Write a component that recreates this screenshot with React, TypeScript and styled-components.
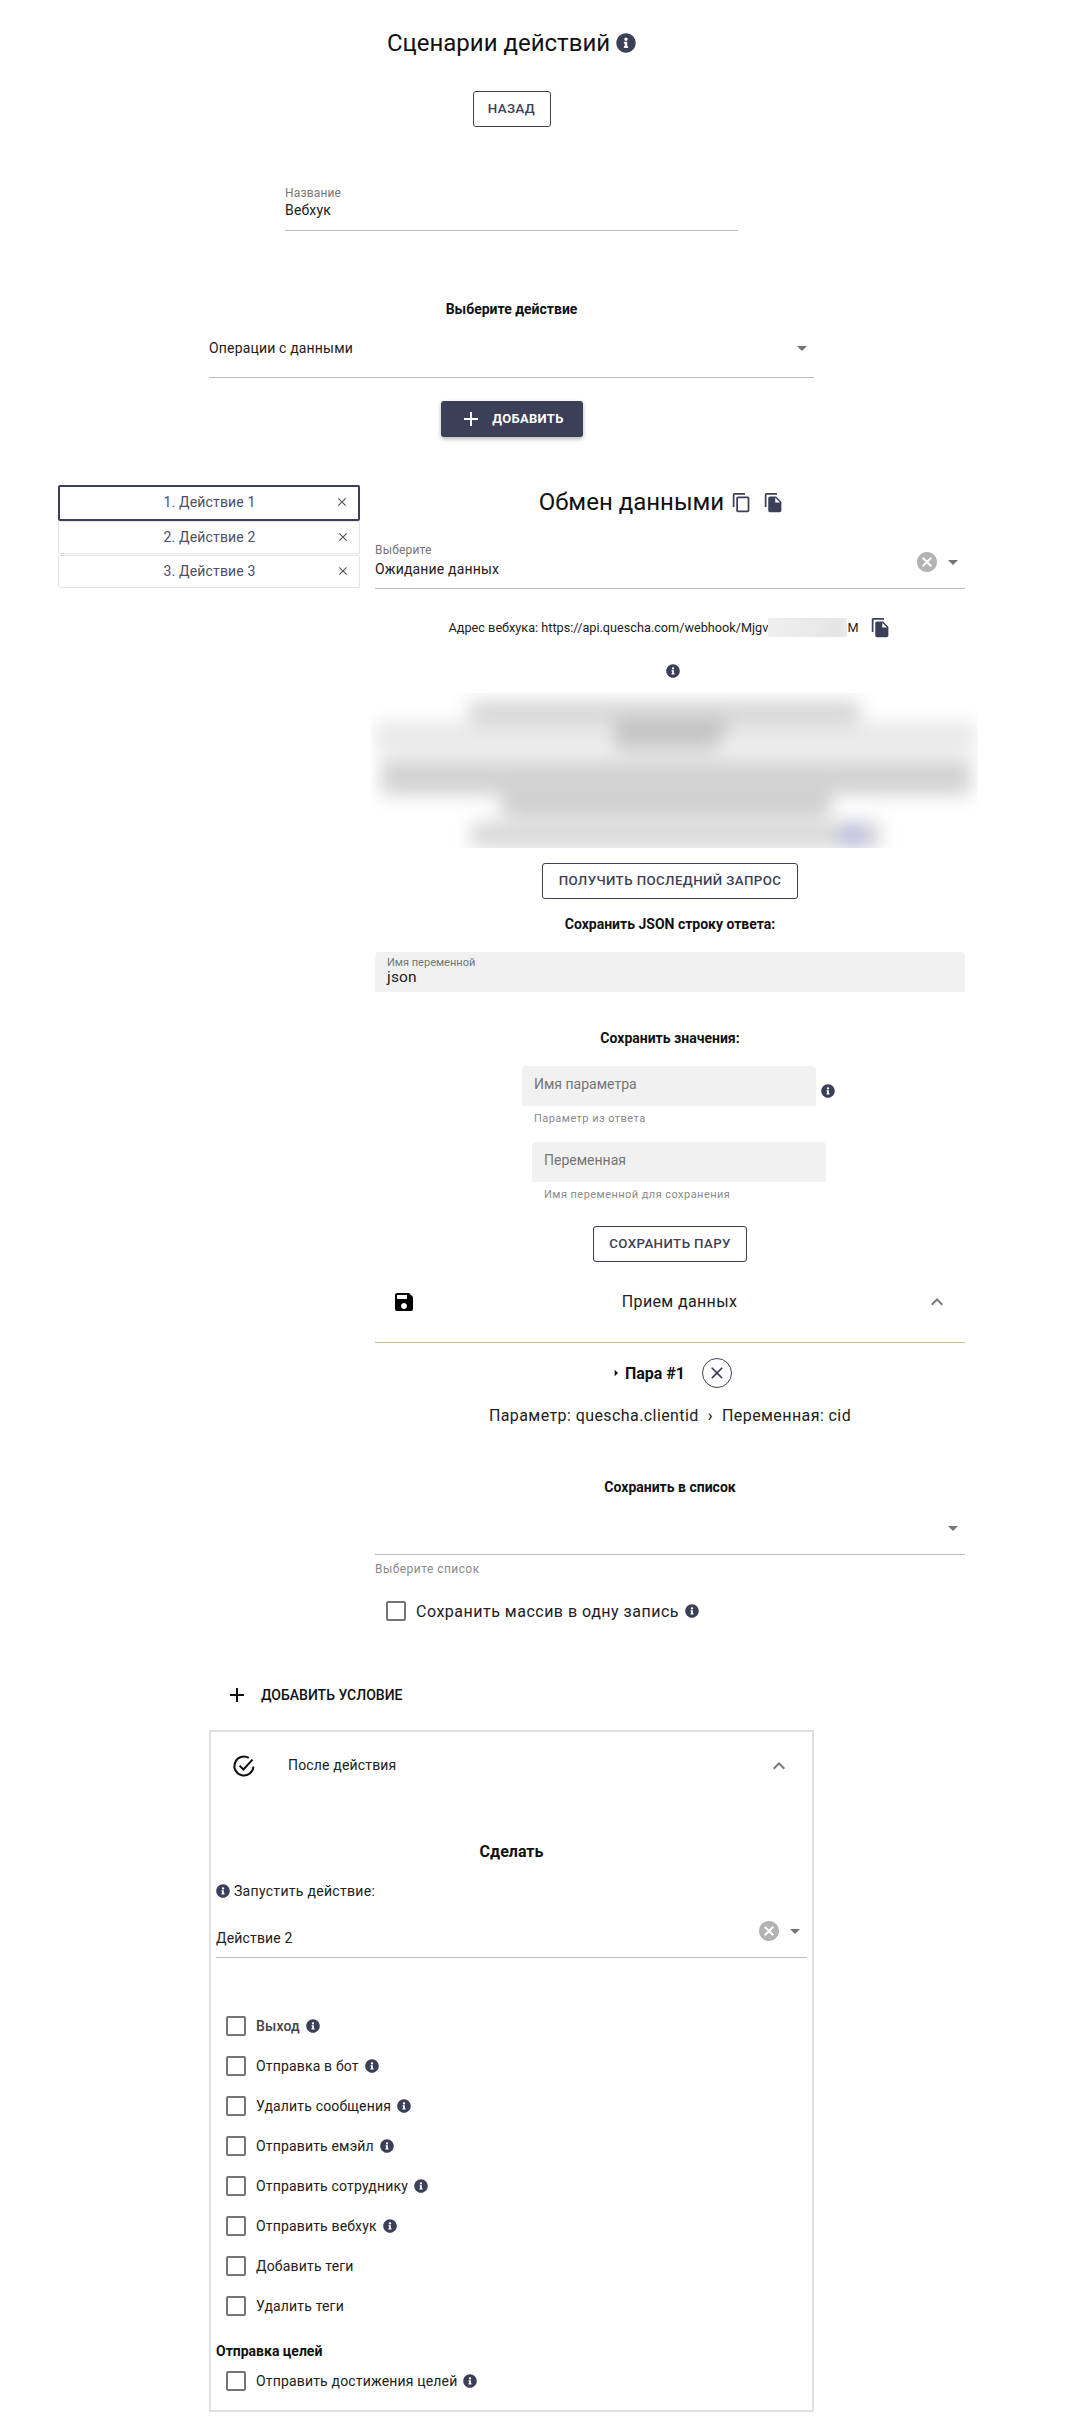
import React from "react";
import styled, { createGlobalStyle } from "styled-components";
import { FaInfoCircle } from "react-icons/fa";

const NAVY = "#3c3f58";

const Global = createGlobalStyle`
  html, body { margin: 0; padding: 0; background: #fff; }
  body { font-family: Roboto, "Noto Sans", sans-serif; color: #111; font-size: 14px; letter-spacing: 0.17px; }
  * { box-sizing: border-box; }
`;

const Page = styled.div`
  width: 1023px;
  padding: 27px 0 23px;
  display: flex;
  flex-direction: column;
  align-items: center;
`;

const TitleRow = styled.div<{ $mt?: number; $pr?: number }>`
  display: flex;
  align-items: center;
  justify-content: center;
  gap: 6px;
  height: 32px;
  margin-top: ${(p) => p.$mt ?? 0}px;
  padding-right: ${(p) => p.$pr ?? 0}px;
  align-self: stretch;
`;

const Title = styled.h1`
  margin: 0;
  font-size: 24px;
  line-height: 32px;
  font-weight: 400;
  letter-spacing: 0;
  color: #111;
`;

const OutlineButton = styled.button<{ $mt: number; $w: number }>`
  width: ${(p) => p.$w}px;
  height: 36px;
  margin-top: ${(p) => p.$mt}px;
  flex: none;
  border: 1px solid ${NAVY};
  border-radius: 3px;
  background: #fff;
  color: ${NAVY};
  font: 500 13.3px/20px Roboto, sans-serif;
  letter-spacing: 0.4px;
  text-transform: uppercase;
  padding: 0;
  align-self: center;
`;

const NameField = styled.div`
  width: 453px;
  height: 48px;
  margin-top: 56px;
  padding-top: 3px;
  border-bottom: 1px solid #bdbdbd;
`;

const SmallLabel = styled.div`
  font-size: 12px;
  line-height: 14px;
  color: #757575;
`;

const FieldValue = styled.div<{ $mt?: number }>`
  font-size: 14px;
  line-height: 20px;
  margin-top: ${(p) => p.$mt ?? 0}px;
  color: #212121;
`;

const SectionTitle = styled.div<{ $mt: number; $size?: number; $lh?: number }>`
  margin-top: ${(p) => p.$mt}px;
  font-size: ${(p) => p.$size ?? 14}px;
  line-height: ${(p) => p.$lh ?? 20}px;
  font-weight: 700;
  letter-spacing: 0;
  color: #111;
  text-align: center;
  align-self: stretch;
`;

const ActionSelect = styled.div`
  width: 605px;
  height: 59px;
  display: flex;
  align-items: center;
  justify-content: space-between;
  border-bottom: 1px solid #bdbdbd;
  color: #212121;
  font-size: 14px;
`;

const PrimaryButton = styled.button`
  width: 142px;
  height: 36px;
  margin-top: 23px;
  display: flex;
  align-items: center;
  justify-content: center;
  gap: 9px;
  border: 0;
  border-radius: 3px;
  background: ${NAVY};
  color: #fff;
  font: 700 13px/20px Roboto, sans-serif;
  letter-spacing: 0.3px;
  text-transform: uppercase;
  box-shadow: 0 2px 4px rgba(0, 0, 0, 0.3);
  padding: 0;
`;

const Workspace = styled.div`
  width: 907px;
  margin-top: 48px;
  display: grid;
  grid-template-columns: 302px 590px;
  column-gap: 15px;
  align-items: start;
`;

const TabList = styled.div`
  display: flex;
  flex-direction: column;
`;

const Tab = styled.div<{ $active?: boolean }>`
  height: ${(p) => (p.$active ? 36 : 33)}px;
  margin-bottom: ${(p) => (p.$active ? 0 : 1)}px;
  display: grid;
  grid-template-columns: 1fr 14px;
  align-items: center;
  padding: 0 9px 2px 24px;
  border: ${(p) => (p.$active ? `2px solid ${NAVY}` : "1px solid #e4e4e4")};
  border-radius: 2px;
  color: #4c4f66;
  font-size: 14px;
  text-align: center;
`;

const Panel = styled.div`
  display: flex;
  flex-direction: column;
  padding-top: 1px;
`;

const IconRow = styled.div`
  display: flex;
  gap: 11px;
  margin-left: 1px;
`;

const SelectBox = styled.div<{ $mt?: number; $h: number }>`
  height: ${(p) => p.$h}px;
  margin-top: ${(p) => p.$mt ?? 0}px;
  display: flex;
  align-items: flex-end;
  justify-content: space-between;
  border-bottom: 1px solid #bdbdbd;
`;

const SelectText = styled.div<{ $pb?: number }>`
  padding-bottom: ${(p) => p.$pb ?? 9}px;
  color: #212121;
`;

const SelectIcons = styled.div`
  display: flex;
  gap: 2px;
  margin-bottom: 14px;
`;

const Webhook = styled.div`
  margin-top: 26px;
  height: 24px;
  display: flex;
  align-items: center;
  justify-content: center;
  gap: 12px;
  font-size: 12.7px;
  letter-spacing: 0;
  color: #212121;
`;

const WebhookText = styled.div`
  display: flex;
  align-items: center;
  white-space: nowrap;
`;

const Redaction = styled.span`
  width: 79px;
  height: 19px;
  background: linear-gradient(90deg, #efeff0, #e9e9ea 60%, #e5e5e6 90%, #ececed);
`;

const CenterInfo = styled.div`
  margin-top: 25px;
  height: 14px;
  display: flex;
  justify-content: center;
  padding-left: 6px;
`;

const BlurClip = styled.div`
  margin: 15px -13px 0 -4px;
  height: 155px;
  overflow: hidden;
`;

const BlurInner = styled.div`
  height: 155px;
  padding-top: 8px;
  filter: blur(9px);
  display: flex;
  flex-direction: column;
`;

const BlurBar = styled.div<{ $ml: number; $w: number; $h: number; $mt?: number; $tone: string }>`
  margin-left: ${(p) => p.$ml}px;
  width: ${(p) => p.$w}px;
  height: ${(p) => p.$h}px;
  margin-top: ${(p) => p.$mt ?? 0}px;
  background: ${(p) => p.$tone};
  flex: none;
`;

const FilledField = styled.div`
  margin-top: 18px;
  height: 40px;
  padding: 5px 12px 0;
  background: #f1f1f1;
  border-radius: 4px 4px 0 0;
`;

const FilledLabel = styled.div`
  font-size: 11px;
  line-height: 12px;
  letter-spacing: 0;
  color: #757575;
`;

const FilledValue = styled.div`
  font-size: 15.5px;
  line-height: 16px;
  color: #212121;
`;

const PairField = styled.div<{ $ml: number; $mt: number }>`
  margin: ${(p) => p.$mt}px 0 0 ${(p) => p.$ml}px;
`;

const PairLine = styled.div`
  display: flex;
  align-items: flex-end;
  gap: 5px;
`;

const PairInput = styled.div`
  width: 294px;
  height: 40px;
  padding: 10px 12px 0;
  background: #f1f1f1;
  border-radius: 4px 4px 0 0;
  color: #757575;
  font-size: 14px;
  line-height: 16px;
  letter-spacing: 0;
`;

const PairInfo = styled.span`
  display: flex;
  margin-bottom: 8px;
`;

const Helper = styled.div<{ $ml?: number; $mt: number; $size?: number }>`
  margin: ${(p) => p.$mt}px 0 0 ${(p) => p.$ml ?? 0}px;
  font-size: ${(p) => p.$size ?? 11}px;
  line-height: 14px;
  letter-spacing: 0.45px;
  color: #8a8a8a;
`;

const AccordionHead = styled.div`
  height: 81px;
  display: flex;
  align-items: center;
  justify-content: space-between;
  padding: 0 16px 0 17px;
  border-bottom: 1px solid #c7b991;
`;

const AccordionTitle = styled.div`
  font-size: 16px;
  line-height: 24px;
  letter-spacing: 0.36px;
  color: #212121;
  padding-left: 18px;
`;

const PairRow = styled.div`
  margin-top: 15px;
  height: 30px;
  display: flex;
  align-items: center;
  justify-content: center;
  gap: 1px;
  font-size: 16px;
  font-weight: 700;
  letter-spacing: 0;
`;

const RoundClose = styled.span`
  width: 30px;
  height: 30px;
  margin-left: 16px;
  display: flex;
  align-items: center;
  justify-content: center;
  border: 1px solid ${NAVY};
  border-radius: 50%;
`;

const ParamLine = styled.div`
  margin-top: 16px;
  font-size: 16px;
  line-height: 24px;
  letter-spacing: 0.42px;
  color: #212121;
  text-align: center;
`;

const ParamArrow = styled.span`
  margin: 0 9px;
  font-weight: 500;
`;

const ArrayCheck = styled.div`
  margin-top: 15px;
  height: 40px;
  display: flex;
  align-items: center;
  padding-left: 11px;
  gap: 10px;
  font-size: 16px;
  letter-spacing: 0.5px;
  color: #212121;
`;

const Box = styled.span`
  width: 20px;
  height: 20px;
  flex: none;
  border: 2px solid #757575;
  border-radius: 2px;
`;

const LabelWithInfo = styled.span<{ $bold?: boolean }>`
  display: flex;
  align-items: center;
  gap: 6px;
  font-weight: ${(p) => (p.$bold ? 500 : 400)};
  color: ${(p) => (p.$bold ? "#444" : "#212121")};
`;

const ConditionButton = styled.div`
  width: 605px;
  height: 36px;
  margin-top: 46px;
  display: flex;
  align-items: center;
  gap: 12px;
  padding-left: 16px;
  font-weight: 500;
  font-size: 14px;
  letter-spacing: 0;
  color: #111;
  text-transform: uppercase;
`;

const Card = styled.div`
  width: 605px;
  margin-top: 17px;
  border: 2px solid #e0e0e0;
  padding: 0 5px 9px;
  display: flex;
  flex-direction: column;
`;

const CardHead = styled.div`
  height: 68px;
  display: flex;
  align-items: center;
  padding: 0 16px 0 16px;
`;

const CardHeadTitle = styled.div`
  flex: 1;
  padding-left: 32px;
  font-size: 14px;
  margin-top: -3px;
  color: #212121;
`;

const RunLabel = styled.div`
  margin-top: 17px;
  height: 20px;
  display: flex;
  align-items: center;
  gap: 4px;
  letter-spacing: 0.3px;
  color: #212121;
`;

const Checks = styled.div`
  margin-top: 48px;
  display: flex;
  flex-direction: column;
`;

const CheckRow = styled.div`
  height: 40px;
  display: flex;
  align-items: center;
  padding-left: 10px;
  gap: 10px;
  font-size: 14px;
`;

const GoalsTitle = styled.div`
  margin-top: 15px;
  font-weight: 700;
  line-height: 20px;
  letter-spacing: 0;
`;

const Info = ({ size = 14 }: { size?: number }) => <FaInfoCircle size={size} color={NAVY} />;

const Mi = ({ d, size = 24, color = NAVY }: { d: string; size?: number; color?: string }) => (
  <svg width={size} height={size} viewBox="0 0 24 24" fill={color} style={{ flex: "none", display: "block" }}>
    <path d={d} />
  </svg>
);

const P_COPY = "M16 1H4c-1.1 0-2 .9-2 2v14h2V3h12V1zm3 4H8c-1.1 0-2 .9-2 2v14c0 1.1.9 2 2 2h11c1.1 0 2-.9 2-2V7c0-1.1-.9-2-2-2zm0 16H8V7h11v14z";
const P_FILE = "M16 1H4c-1.1 0-2 .9-2 2v14h2V3h12V1zm-1 4l6 6v10c0 1.1-.9 2-2 2H7.99C6.89 23 6 22.1 6 21l.01-14c0-1.1.89-2 1.99-2h7zm-1 7h5.5L14 6.5V12z";
const P_CANCEL = "M12 2C6.47 2 2 6.47 2 12s4.47 10 10 10 10-4.47 10-10S17.53 2 12 2zm5 13.59L15.59 17 12 13.41 8.41 17 7 15.59 10.59 12 7 8.41 8.41 7 12 10.59 15.59 7 17 8.41 13.41 12 17 15.59z";
const P_DROP = "M7 10l5 5 5-5z";
const P_LESS = "M12 8l-6 6 1.41 1.41L12 10.83l4.59 4.58L18 14z";
const P_SAVE = "M17 3H5c-1.11 0-2 .9-2 2v14c0 1.1.89 2 2 2h14c1.1 0 2-.9 2-2V7l-4-4zm-5 16c-1.66 0-3-1.34-3-3s1.34-3 3-3 3 1.34 3 3-1.34 3-3 3zm3-10H5V5h10v4z";
const P_PLUS = "M19 13h-6v6h-2v-6H5v-2h6V5h2v6h6v2z";
const P_CLOSE = "M19 6.41L17.59 5 12 10.59 6.41 5 5 6.41 10.59 12 5 17.59 6.41 19 12 13.41 17.59 19 19 17.59 13.41 12z";
const P_CARET = "M10 7l5 5-5 5z";

const Arrow = () => <Mi d={P_DROP} color="#757575" />;
const Clear = () => <Mi d={P_CANCEL} color="#b3b3b3" />;

const CheckCircle = () => (
  <svg width={24} height={24} viewBox="0 0 24 24" fill="none" stroke="#111" strokeWidth={2} style={{ flex: "none" }}>
    <path d="M21.4 12.5a9.5 9.5 0 1 1-4.6-8.6" />
    <path d="M7.6 11.6l3.8 3.9L20.5 5.6" />
  </svg>
);

const tabs = ["1. Действие 1", "2. Действие 2", "3. Действие 3"];
const checks: [string, boolean][] = [
  ["Отправка в бот", true],
  ["Удалить сообщения", true],
  ["Отправить емэйл", true],
  ["Отправить сотруднику", true],
  ["Отправить вебхук", true],
  ["Добавить теги", false],
  ["Удалить теги", false],
];

export default function App() {
  return (
    <>
      <Global />
      <Page>
        <TitleRow>
          <Title>Сценарии действий</Title>
          <Info size={20} />
        </TitleRow>
        <OutlineButton $mt={32} $w={78}>Назад</OutlineButton>
        <NameField>
          <SmallLabel>Название</SmallLabel>
          <FieldValue>Вебхук</FieldValue>
        </NameField>
        <SectionTitle $mt={68}>Выберите действие</SectionTitle>
        <ActionSelect>
          Операции с данными
          <Arrow />
        </ActionSelect>
        <PrimaryButton>
          <Mi d={P_PLUS} color="#fff" />
          Добавить
        </PrimaryButton>

        <Workspace>
          <TabList>
            {tabs.map((t, i) => (
              <Tab key={t} $active={i === 0}>
                <span>{t}</span>
                <Mi d={P_CLOSE} size={14} color="#555" />
              </Tab>
            ))}
          </TabList>
          <Panel>
            <TitleRow $pr={17}>
              <Title>Обмен данными</Title>
              <IconRow>
                <Mi d={P_COPY} size={21} />
                <Mi d={P_FILE} size={21} />
              </IconRow>
            </TitleRow>
            <SelectBox $h={71}>
              <SelectText>
                <SmallLabel>Выберите</SmallLabel>
                <FieldValue $mt={2}>Ожидание данных</FieldValue>
              </SelectText>
              <SelectIcons>
                <Clear />
                <Arrow />
              </SelectIcons>
            </SelectBox>
            <Webhook>
              <WebhookText>
                Адрес вебхука: https://api.quescha.com/webhook/Mjgv
                <Redaction />M
              </WebhookText>
              <Mi d={P_FILE} size={21} />
            </Webhook>
            <CenterInfo>
              <Info />
            </CenterInfo>
            <BlurClip>
              <BlurInner>
                <BlurBar $ml={98} $w={391} $h={21} $tone="#d6d6d6" />
                <BlurBar $ml={4} $w={600} $h={30} $tone="#e9e9e9" />
                <BlurBar $ml={244} $w={111} $h={12} $mt={-30} $tone="#bdbdbd" />
                <BlurBar $ml={244} $w={103} $h={18} $tone="#cbcbcb" />
                <BlurBar $ml={10} $w={590} $h={36} $mt={7} $tone="#d3d3d3" />
                <BlurBar $ml={130} $w={330} $h={22} $tone="#cfcfcf" />
                <BlurBar $ml={100} $w={410} $h={26} $mt={5} $tone="#d9d9d9" />
                <BlurBar $ml={470} $w={24} $h={24} $mt={-25} $tone="#b8bcdc" />
              </BlurInner>
            </BlurClip>
            <OutlineButton $mt={15} $w={256}>Получить последний запрос</OutlineButton>
            <SectionTitle $mt={15}>Сохранить JSON строку ответа:</SectionTitle>
            <FilledField>
              <FilledLabel>Имя переменной</FilledLabel>
              <FilledValue>json</FilledValue>
            </FilledField>
            <SectionTitle $mt={36}>Сохранить значения:</SectionTitle>
            <PairField $ml={147} $mt={18}>
              <PairLine>
                <PairInput>Имя параметра</PairInput>
                <PairInfo>
                  <Info />
                </PairInfo>
              </PairLine>
              <Helper $ml={12} $mt={6}>Параметр из ответа</Helper>
            </PairField>
            <PairField $ml={157} $mt={16}>
              <PairInput>Переменная</PairInput>
              <Helper $ml={12} $mt={6}>Имя переменной для сохранения</Helper>
            </PairField>
            <OutlineButton $mt={24} $w={154}>Сохранить пару</OutlineButton>
            <AccordionHead>
              <Mi d={P_SAVE} color="#000" />
              <AccordionTitle>Прием данных</AccordionTitle>
              <Mi d={P_LESS} color="#757575" />
            </AccordionHead>
            <PairRow>
              <Mi d={P_CARET} size={16} color="#111" />
              Пара #1
              <RoundClose>
                <Mi d={P_CLOSE} size={20} />
              </RoundClose>
            </PairRow>
            <ParamLine>
              Параметр: quescha.clientid<ParamArrow>›</ParamArrow>Переменная: cid
            </ParamLine>
            <SectionTitle $mt={49}>Сохранить в список</SectionTitle>
            <SelectBox $h={58}>
              <span />
              <SelectIcons>
                <Arrow />
              </SelectIcons>
            </SelectBox>
            <Helper $ml={0} $mt={7} $size={12}>Выберите список</Helper>
            <ArrayCheck>
              <Box />
              <LabelWithInfo>
                Сохранить массив в одну запись
                <Info />
              </LabelWithInfo>
            </ArrayCheck>
          </Panel>
        </Workspace>

        <ConditionButton>
          <Mi d={P_PLUS} color="#111" />
          Добавить условие
        </ConditionButton>

        <Card>
          <CardHead>
            <CheckCircle />
            <CardHeadTitle>После действия</CardHeadTitle>
            <Mi d={P_LESS} color="#757575" />
          </CardHead>
          <SectionTitle $mt={40} $size={16} $lh={24}>Сделать</SectionTitle>
          <RunLabel>
            <Info />
            Запустить действие:
          </RunLabel>
          <SelectBox $h={57}>
            <SelectText $pb={11}>Действие 2</SelectText>
            <SelectIcons>
              <Clear />
              <Arrow />
            </SelectIcons>
          </SelectBox>
          <Checks>
            <CheckRow>
              <Box />
              <LabelWithInfo $bold>
                Выход
                <Info />
              </LabelWithInfo>
            </CheckRow>
            {checks.map(([label, info]) => (
              <CheckRow key={label}>
                <Box />
                <LabelWithInfo>
                  {label}
                  {info && <Info />}
                </LabelWithInfo>
              </CheckRow>
            ))}
          </Checks>
          <GoalsTitle>Отправка целей</GoalsTitle>
          <CheckRow>
            <Box />
            <LabelWithInfo>
              Отправить достижения целей
              <Info />
            </LabelWithInfo>
          </CheckRow>
        </Card>
      </Page>
    </>
  );
}
